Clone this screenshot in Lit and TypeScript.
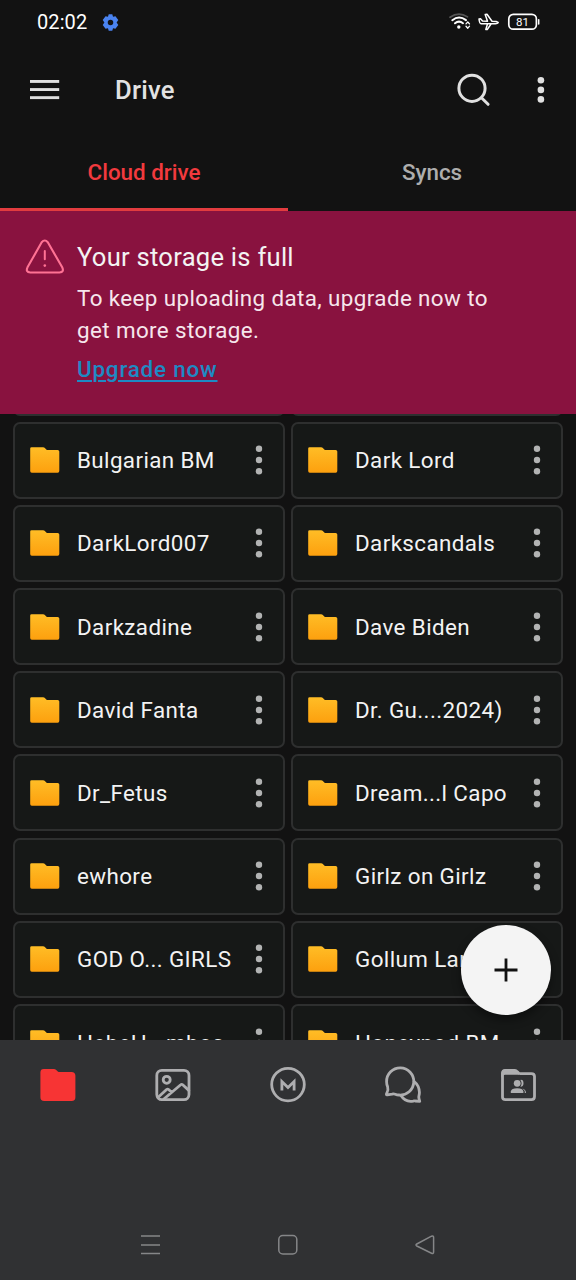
import { LitElement, html, css, svg } from "lit";
import { customElement, property } from "lit/decorators.js";

const folders: string[] = [
  "", "",
  "Bulgarian BM", "Dark Lord",
  "DarkLord007", "Darkscandals",
  "Darkzadine", "Dave Biden",
  "David Fanta", "Dr. Gu....2024)",
  "Dr_Fetus", "Dream...l Capo",
  "ewhore", "Girlz on Girlz",
  "GOD O... GIRLS", "Gollum Lands",
  "HebeH...mbos", "Honeypod BM",
];

@customElement("folder-card")
class FolderCard extends LitElement {
  @property() name = "";

  static styles = css`
    :host {
      display: flex;
      align-items: center;
      box-sizing: border-box;
      border: 2px solid #2e2f2f;
      border-radius: 7px;
      background: #161817;
      padding: 0 20px 0 15px;
      min-width: 0;
    }
    .folder { flex: none; width: 30px; height: 26px; }
    .name {
      flex: 1;
      padding-left: 17px;
      white-space: nowrap;
      font-size: 22.4px;
      letter-spacing: 0.39px;
      line-height: 32px;
      color: #f3f3f3;
    }
    .more { flex: none; width: 8px; height: 30px; fill: #b2b3b3; }
  `;

  render() {
    return html`
      <svg class="folder" viewBox="0 0 30 26">
        <defs>
          <linearGradient id="g" x1="0" y1="0" x2="0" y2="1">
            <stop offset="0" stop-color="#ffbd26" />
            <stop offset="1" stop-color="#fda00e" />
          </linearGradient>
        </defs>
        <path fill="url(#g)" d="M1.6 0.2H13.2Q14 0.2 14.6 0.8L16.3 2.4Q16.9 2.9 17.7 2.9H27.6Q29.3 2.9 29.3 4.6V24.1Q29.3 25.7 27.7 25.7H1.8Q0.2 25.7 0.2 24.1V1.6Q0.2 0.2 1.6 0.2Z" />
      </svg>
      <span class="name">${this.name}</span>
      <svg class="more" viewBox="0 0 8 30">
        <circle cx="4" cy="3.7" r="3.2" /><circle cx="4" cy="15" r="3.2" /><circle cx="4" cy="26.3" r="3.2" />
      </svg>`;
  }
}

const navIcons = [
  svg`<path fill="#f73434" d="M4.4 3H17.4Q18.8 3 19.8 3.9L21.4 5.4Q22.1 6 23.3 6H35Q39 6 39 9.8V31.2Q39 35 35.2 35H7.8Q4 35 4 31.2V6.4Q4 3 7.4 3Z" />`,
  svg`<rect x="5.4" y="4.400" width="32.2" height="29.200" rx="5" />
      <circle cx="15.300" cy="13.800" r="3.500" />
      <path d="M6.500 31.500L15.200 23.500Q16.200 22.700 17.200 23.500L20 26M12.500 33L29.300 18.800Q30.300 17.900 31.300 18.800L37.400 24.400" />`,
  svg`<circle cx="21" cy="18.600" r="16.300" />
      <path stroke-linejoin="miter" stroke-linecap="butt" d="M14.900 24.500V15.600L21 21.500L27.100 15.600V24.500" />`,
  svg`<path d="M4.800 27.200Q6.600 24 5.600 20.700Q4.600 18.500 4.600 15.700A13.600 13.600 0 1 1 17 29Q15 29 13.200 28.200Q11.700 27.600 10.100 28.100L5.300 28.800Q3.800 29 4.800 27.200Z" />
      <path d="M32.200 15.500Q37 19.400 37.400 26Q37.500 27.800 37 29.500Q36.600 31 37 32.500L37.700 35.400L33.200 35Q32.200 34.800 31.200 35.100Q23.200 36.500 19 29.600" />`,
  svg`<path d="M5.500 31V7.500Q5.500 4.500 8.500 4.500H17.300Q18.800 4.500 19.800 5.400L21.200 6.600Q22.100 7.600 23.500 7.600H34.400Q37.500 7.600 37.500 10.600V30.500Q37.500 33.600 34.400 33.600H8.500Q5.500 33.600 5.500 31Z" />
      <path fill="#aeaeb0" stroke="none" d="M4.200 9V7Q5 3.200 8.500 3.200H17.300L22.800 8.800H8.300Q5.500 8.800 4.200 12Z" />
      <g fill="#aeaeb0" stroke="none">
        <circle cx="20.200" cy="17.300" r="3.400" />
        <path d="M13.800 27V25.600Q14.400 22.300 20.200 22.300Q25.800 22.300 26.400 25.600V27Z" />
        <path d="M23.400 13.900Q26.500 13.500 26.500 17.300Q26.500 20.900 23.400 20.700Q25.800 17.200 23.400 13.900ZM25.500 22.500Q29 23.500 29 27H27.800Q28 24.400 25.500 22.500Z" />
      </g>`,
];

@customElement("app-root")
class AppRoot extends LitElement {
  static styles = css`
    :host {
      display: flex;
      flex-direction: column;
      width: 576px;
      height: 1280px;
      overflow: hidden;
      position: relative;
      background: #121212;
      font-family: Roboto, sans-serif;
      color: #f3f3f3;
    }
    svg { display: block; flex: none; }
    .status { height: 45px; display: flex; align-items: center; padding: 0 36px 1px 37px; box-sizing: border-box; }
    .time { font-size: 20px; letter-spacing: 0.1px; color: #fff; width: 65px; }
    .grow { flex: 1; }
    .bar { height: 90px; display: flex; align-items: center; padding: 0 30px; box-sizing: border-box; }
    .title { font-size: 25.6px; font-weight: 500; letter-spacing: 0.25px; color: #e2e2e2; padding-left: 55px; flex: 1; }
    .more { margin-left: 45px; }
    .tabs { height: 76px; display: grid; grid-template-columns: 1fr 1fr; }
    .tab {
      display: flex; align-items: center; justify-content: center;
      font-size: 22.4px; font-weight: 500; color: #adadad;
      border-bottom: 3px solid transparent; box-sizing: border-box;
    }
    .tab.active { color: #f23a3e; border-bottom-color: #e23c3f; }
    .banner { height: 203px; background: #89123f; box-sizing: border-box; padding: 28px 24px 0 25px; display: flex; }
    .warn { margin-right: 12px; }
    .head { font-size: 25.6px; line-height: 36px; letter-spacing: 0.25px; }
    .body { font-size: 22.4px; line-height: 32px; letter-spacing: 0.39px; margin-top: 7px; color: #f6e6ec; }
    .link { font-size: 22.4px; line-height: 32px; font-weight: 500; letter-spacing: 0.82px; margin-top: 7px; color: #1e8ac4; text-decoration: underline; text-decoration-thickness: 1.5px; text-underline-offset: 3px; }
    .list { height: 626px; overflow: hidden; }
    .grid {
      display: grid;
      grid-template-columns: 1fr 1fr;
      grid-auto-rows: 77px;
      gap: 6.2px 6px;
      padding: 0 13px;
      margin-top: -75.5px;
    }
    .fab {
      position: absolute; left: 460.5px; top: 924.5px; width: 90px; height: 90px;
      border-radius: 50%; background: #f4f4f4;
      box-shadow: 0 5px 10px rgba(0, 0, 0, 0.4);
      display: flex; align-items: center; justify-content: center;
    }
    .bottom { flex: 1; background: #303133; display: flex; flex-direction: column; justify-content: space-between; }
    .nav { height: 90px; display: grid; grid-template-columns: repeat(5, 1fr); align-items: center; justify-items: center; }
    .nav svg { fill: none; stroke: #aeaeb0; stroke-width: 2.8; stroke-linecap: round; stroke-linejoin: round; }
    .nav .sel { stroke: none; }
    .system { height: 70px; display: flex; align-items: center; justify-content: space-between; padding: 0 140px; fill: none; stroke: #858688; stroke-width: 1.5; }
  `;

  render() {
    return html`
      <div class="status">
        <span class="time">02:02</span>
        <svg width="17" height="17" viewBox="0 0 24 24">
          <path fill="#4a83f0" fill-rule="evenodd" d="M9.500 0.500H14.500L15.600 4L19 3.200L23 8.500L20.600 12L23 15.500L19 20.800L15.600 20L14.500 23.500H9.500L8.400 20L5 20.800L1 15.500L3.400 12L1 8.500L5 3.200L8.400 4ZM12 8.100A3.900 3.900 0 1 0 12 15.900A3.900 3.900 0 1 0 12 8.100Z" />
        </svg>
        <span class="grow"></span>
        <svg width="91" height="20" viewBox="0 0 91 20" fill="none" stroke="#fff" stroke-width="1.7" stroke-linecap="round" stroke-linejoin="round">
          <path d="M1 5.300Q9.800 -0.800 18.500 4.900" stroke="#555" />
          <path d="M3.300 8.200Q10 2.900 17 8.100M6 11.300Q9.900 8 14 11.200" stroke-width="2" />
          <circle cx="9.800" cy="15" r="1.700" fill="#fff" stroke="none" />
          <path d="M17 11.900L18.800 10L20.500 11.900M17 14.200L18.800 16.200L20.500 14.200" stroke-width="1.300" />
          <path d="M30 7L31.500 6.800L33.500 9L38.500 9.200L36.200 2.400L38 2.200L43 9.200L47.200 9.500Q49.400 10.200 49.300 10.600Q48.500 11.700 46.500 11.700H32Q30.500 11.700 30 7ZM38.500 12L36.800 17.500L38.200 17.600L42 12" stroke-width="1.500" />
          <rect x="59.800" y="2.400" width="27.600" height="14.800" rx="4.500" />
          <path d="M89.700 7.800V12" stroke-width="1.500" />
          <text x="73.500" y="13.900" text-anchor="middle" font-family="Roboto, sans-serif" font-size="11.500" fill="#fff" stroke="none">81</text>
        </svg>
      </div>

      <div class="bar">
        <svg width="30" height="22" viewBox="0 0 30 22" fill="#e0e0e0">
          <rect x="0" y="1" width="29.200" height="2.900" /><rect x="0" y="9.100" width="29.200" height="2.900" /><rect x="0" y="17.200" width="29.200" height="2.900" />
        </svg>
        <span class="title">Drive</span>
        <svg width="34" height="34" viewBox="0 0 34 34" fill="none" stroke="#e0e0e0" stroke-width="3" stroke-linecap="round">
          <circle cx="15" cy="15.300" r="13.100" /><path d="M24.700 25L31.100 31.300" />
        </svg>
        <svg class="more" width="10" height="28" viewBox="0 0 10 28" fill="#e0e0e0">
          <circle cx="4.900" cy="4.200" r="3.300" /><circle cx="4.900" cy="13.900" r="3.300" /><circle cx="4.900" cy="23.400" r="3.300" />
        </svg>
      </div>

      <div class="tabs">
        <div class="tab active">Cloud drive</div>
        <div class="tab">Syncs</div>
      </div>

      <div class="banner">
        <svg class="warn" width="40" height="36" viewBox="0 0 40 36" fill="none" stroke="#ff7294" stroke-width="2.100" stroke-linecap="round" stroke-linejoin="round">
          <path d="M16.700 3.300Q19.800 -0.200 22.800 3.300L37.200 28.300Q39.500 33.300 34.500 33.500H5.300Q0.300 33.300 2.500 28.300Z" />
          <path d="M19.800 12V20.300" stroke-width="2" />
          <circle cx="19.800" cy="26.600" r="1.300" fill="#ff7294" stroke="none" />
        </svg>
        <div>
          <div class="head">Your storage is full</div>
          <div class="body">To keep uploading data, upgrade now to<br />get more storage.</div>
          <div class="link">Upgrade now</div>
        </div>
      </div>

      <div class="list">
        <div class="grid">${folders.map((f) => html`<folder-card .name=${f}></folder-card>`)}</div>
      </div>

      <div class="fab">
        <svg width="24" height="24" viewBox="0 0 24 24" stroke="#111" stroke-width="2.800"><path d="M12 0.500V23.500M0.500 12H23.500" /></svg>
      </div>

      <div class="bottom">
        <div class="nav">
          ${navIcons.map((icon, i) => html`<svg class=${i === 0 ? "sel" : ""} width="42" height="38" viewBox=${i < 2 ? "0.6 0 42 38" : "0 0 42 38"}>${icon}</svg>`)}
        </div>
        <div class="system">
          <svg width="22" height="22" viewBox="0 0 22 22"><path d="M1 2H20M1 11H20M1 19.600H20" /></svg>
          <svg width="22" height="22" viewBox="0 0 22 22"><rect x="1.800" y="1.500" width="18" height="18.500" rx="4" /></svg>
          <svg width="22" height="22" viewBox="0 0 22 22" stroke-linejoin="round"><path d="M17.500 2.200Q19.600 1.200 19.600 3.500V18Q19.600 20.200 17.500 19.200L2.800 12Q1.200 11 2.800 10Z" /></svg>
        </div>
      </div>
    `;
  }
}
